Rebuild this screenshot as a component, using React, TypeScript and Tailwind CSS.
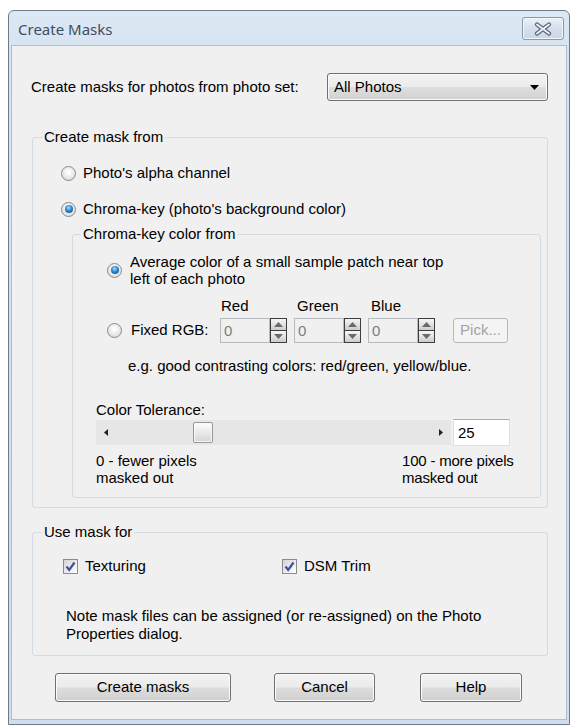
import React from 'react';

const btnBg =
  'bg-[linear-gradient(#f3f3f3_0%,#ebebeb_48%,#dddddd_52%,#cfcfcf_100%)] shadow-[inset_0_0_0_1px_#fbfbfb]';

function Radio({ checked }: { checked?: boolean }) {
  return (
    <span className="w-[15px] h-[15px] shrink-0 rounded-full border border-[#8b8b8b] bg-[radial-gradient(circle_at_50%_40%,#ffffff_10%,#d6d6d6_90%)] flex items-center justify-center">
      {checked && (
        <span className="w-[8px] h-[8px] rounded-full bg-[radial-gradient(circle_at_45%_35%,#a8e2ff_0%,#2a86d2_45%,#0c3f78_100%)]" />
      )}
    </span>
  );
}

function Check() {
  return (
    <span className="w-[15px] h-[15px] shrink-0 border border-[#8b8b8b] bg-[linear-gradient(135deg,#d4d4d4,#ffffff)] flex items-center justify-center">
      <svg width="13" height="13" viewBox="0 0 13 13">
        <path d="M2.5 6.5 L5.2 10 L10.5 2.5" fill="none" stroke="#3e51a0" strokeWidth="2.2" />
      </svg>
    </span>
  );
}

function Spinner() {
  return (
    <div className="w-[17px] h-[25px] flex flex-col border border-[#3d3d3d]">
      <div className="flex-1 flex items-center justify-center bg-[linear-gradient(#f6f6f6,#cdcdcd)] border-b border-[#3d3d3d]">
        <svg width="9" height="5" viewBox="0 0 9 5">
          <path d="M0 5 L4.5 0 L9 5 Z" fill="#6a6a6a" />
        </svg>
      </div>
      <div className="flex-1 flex items-center justify-center bg-[linear-gradient(#f6f6f6,#cdcdcd)]">
        <svg width="9" height="5" viewBox="0 0 9 5">
          <path d="M0 0 L9 0 L4.5 5 Z" fill="#6a6a6a" />
        </svg>
      </div>
    </div>
  );
}

function RgbField({ label, pl }: { label: string; pl: string }) {
  return (
    <div className="flex flex-col">
      <span className={`h-[17px] leading-[17px] mb-[4px] ${pl}`}>{label}</span>
      <div className="flex">
        <div className="w-[50px] h-[25px] border border-[#b7bbbf] bg-[#f0f0f0] pl-[3px] leading-[23px] text-[#7d7d7d]">0</div>
        <Spinner />
      </div>
    </div>
  );
}

function Button({ label, w }: { label: string; w: string }) {
  return (
    <div className={`${w} h-[29px] rounded-[3px] border border-[#707070] ${btnBg} flex items-center justify-center`}>
      {label}
    </div>
  );
}

export default function App() {
  return (
    <div className="w-[577px] h-[728px] bg-white pt-[10px] pl-[8px] font-['Liberation_Sans',Arial,sans-serif] text-[15px] text-black">
      <div className="w-[562px] h-[715px] border border-[#6d7a8b] rounded-t-[6px] flex flex-col bg-[linear-gradient(#dde8f5,#d6e3f1_40px,#d0ddec)]">
        {/* title bar */}
        <div className="h-[34px] flex items-start justify-between pl-[9px] pr-[5px]">
          <span className="mt-[8px] font-['Noto_Sans',sans-serif] text-[15px] leading-[20px] text-[#3f4d62]">Create Masks</span>
          <div className="mt-[6px] w-[42px] h-[23px] rounded-[3px] border border-[#8898ad] bg-[linear-gradient(#eaf0f7,#d6e0ec_50%,#cbd7e6)] shadow-[inset_0_0_0_1px_#f3f6fa] flex items-center justify-center">
            <svg width="18" height="14" viewBox="0 0 18 14">
              <path d="M3 2.5 L15 11.5 M15 2.5 L3 11.5" stroke="#5a687b" strokeWidth="4.2" strokeLinecap="round" />
              <path d="M3 2.5 L15 11.5 M15 2.5 L3 11.5" stroke="#eef2f7" strokeWidth="1.8" strokeLinecap="round" />
            </svg>
          </div>
        </div>

        {/* client */}
        <div className="flex-1 px-[2px] pb-[4px] pr-[2px]">
          <div className="h-full border border-[#aebdd0] bg-[#f0f0f0] flex flex-col">
            <div className="mt-[27px] flex items-center justify-between pl-[19px] pr-[18px]">
              <span>Create masks for photos from photo set:</span>
              <div className="w-[221px] h-[28px] rounded-[3px] border border-[#707070] bg-[linear-gradient(#f2f2f2,#ebebeb_50%,#dedede_52%,#d2d2d2)] shadow-[inset_0_0_0_1px_#fafafa] flex items-center justify-between pl-[6px] pr-[8px]">
                <span>All Photos</span>
                <svg width="9" height="5" viewBox="0 0 9 5">
                  <path d="M0 0 L9 0 L4.5 5 Z" fill="#000" />
                </svg>
              </div>
            </div>

            <fieldset className="mt-[27px] ml-[20px] w-[516px] border border-[#d3dbe2] rounded-[3px]">
              <legend className="ml-[9px] px-[2px] leading-[18px]">Create mask from</legend>
              <div className="pt-[17px] pl-[28px] pr-[6px] pb-[9px] flex flex-col">
                <div className="h-[20px] flex items-center gap-[7px]">
                  <Radio />
                  <span>Photo's alpha channel</span>
                </div>
                <div className="mt-[16px] h-[20px] flex items-center gap-[7px]">
                  <Radio checked />
                  <span>Chroma-key (photo's background color)</span>
                </div>

                <fieldset className="mt-[6px] ml-[11px] border border-[#d3dbe2] rounded-[3px]">
                  <legend className="ml-[8px] px-[2px] leading-[18px]">Chroma-key color from</legend>
                  <div className="pt-[10px] pb-[11px] flex flex-col">
                    <div className="pl-[34px] flex items-center gap-[8px]">
                      <Radio checked />
                      <span className="leading-[17px]">
                        Average color of a small sample patch near top
                        <br />
                        left of each photo
                      </span>
                    </div>

                    <div className="mt-[10px] pl-[34px] flex items-end">
                      <div className="w-[113px] h-[25px] flex items-center gap-[9px]">
                        <Radio />
                        <span>Fixed RGB:</span>
                      </div>
                      <RgbField label="Red" pl="pl-[1px]" />
                      <div className="w-[7px]" />
                      <RgbField label="Green" pl="pl-[3px]" />
                      <div className="w-[7px]" />
                      <RgbField label="Blue" pl="pl-[3px]" />
                      <div className="ml-[18px] w-[55px] h-[25px] rounded-[3px] border border-[#b5b9bd] bg-[#f4f4f4] flex items-center justify-center text-[#a3a3a3]">
                        Pick...
                      </div>
                    </div>

                    <span className="mt-[14px] pl-[55px] leading-[17px]">
                      e.g. good contrasting colors: red/green, yellow/blue.
                    </span>

                    <span className="mt-[27px] pl-[23px] leading-[17px]">Color Tolerance:</span>

                    <div className="mt-[1px] pl-[23px] flex items-center gap-[2px]">
                      <div className="w-[355px] h-[25px] bg-[#e6e6e6] flex items-center pl-[8px] pr-[8px]">
                        <svg width="4" height="7" viewBox="0 0 4 7" className="shrink-0">
                          <path d="M4 0 L0 3.5 L4 7 Z" fill="#222" />
                        </svg>
                        <div className="w-[85px] shrink-0" />
                        <div className="w-[20px] h-[21px] shrink-0 rounded-[2px] border border-[#979797] bg-[linear-gradient(#fdfdfd,#e9e9e9_50%,#d6d6d6)] shadow-[inset_0_0_0_1px_#f8f8f8]" />
                        <div className="flex-1" />
                        <svg width="4" height="7" viewBox="0 0 4 7" className="shrink-0">
                          <path d="M0 0 L4 3.5 L0 7 Z" fill="#222" />
                        </svg>
                      </div>
                      <div className="w-[57px] h-[27px] bg-white border border-[#dcdfe3] border-t-[#abadb3] pl-[4px] leading-[25px]">
                        25
                      </div>
                    </div>

                    <div className="mt-[6px] pl-[23px] flex leading-[17px]">
                      <span className="w-[306px]">
                        0 - fewer pixels
                        <br />
                        masked out
                      </span>
                      <span className="tracking-[-0.2px]">
                        100 - more pixels
                        <br />
                        masked out
                      </span>
                    </div>
                  </div>
                </fieldset>
              </div>
            </fieldset>

            <fieldset className="mt-[15px] ml-[20px] w-[516px] border border-[#d3dbe2] rounded-[3px]">
              <legend className="ml-[9px] px-[2px] leading-[18px]">Use mask for</legend>
              <div className="pt-[15px] pl-[30px] pb-[12px] flex flex-col">
                <div className="h-[20px] flex items-center">
                  <div className="w-[219px] flex items-center gap-[7px]">
                    <Check />
                    <span>Texturing</span>
                  </div>
                  <div className="flex items-center gap-[7px]">
                    <Check />
                    <span>DSM Trim</span>
                  </div>
                </div>
                <p className="mt-[31px] pl-[3px] leading-[18px]">
                  Note mask files can be assigned (or re-assigned) on the Photo
                  <br />
                  Properties dialog.
                </p>
              </div>
            </fieldset>

            <div className="mt-[17px] ml-[43px] flex items-center">
              <Button label="Create masks" w="w-[176px]" />
              <div className="w-[43px]" />
              <Button label="Cancel" w="w-[101px]" />
              <div className="w-[45px]" />
              <Button label="Help" w="w-[102px]" />
            </div>
          </div>
        </div>
      </div>
    </div>
  );
}
